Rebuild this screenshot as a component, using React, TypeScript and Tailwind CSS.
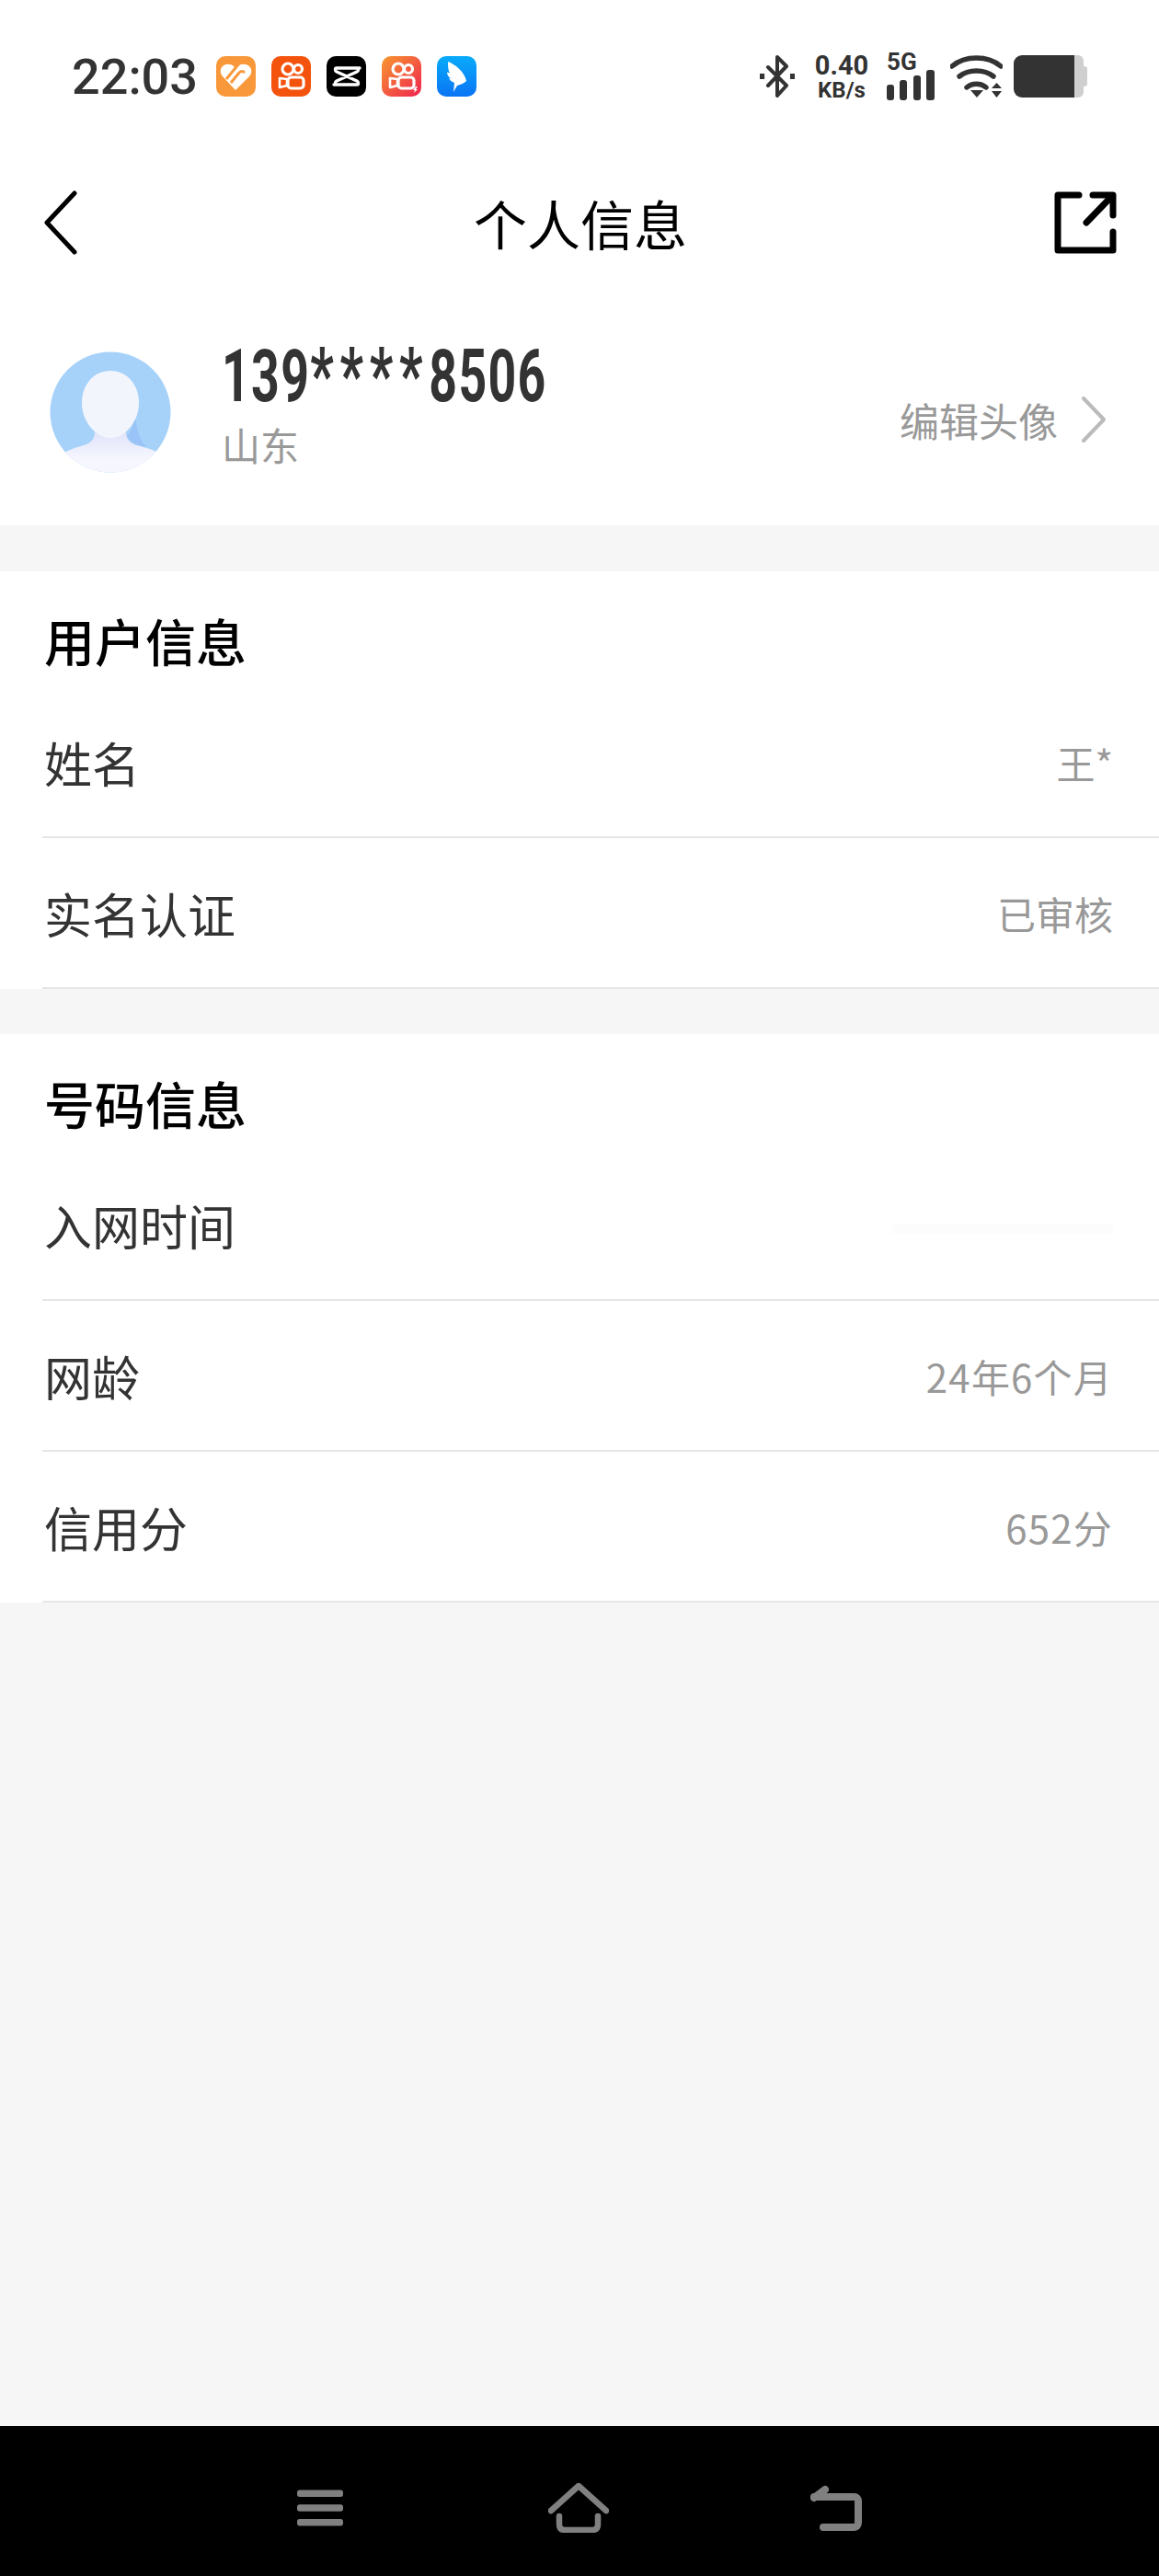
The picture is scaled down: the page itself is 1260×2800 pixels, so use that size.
const cjk = "font-['Noto_Sans_CJK_SC','Noto_Sans',sans-serif]"

const BackIcon = () => (
    <svg width="36" height="70" viewBox="0 0 36 70" fill="none" stroke="#000" strokeWidth="5" strokeLinecap="round" strokeLinejoin="round">
        <path d="M33 3 3 35l30 32" />
    </svg>
)

const ShareIcon = () => (
    <svg width="68" height="68" viewBox="0 0 68 68" fill="none" stroke="#000" strokeWidth="7" strokeLinecap="round" strokeLinejoin="round">
        <path d="M27 4H4v60h60V44" />
        <path d="M42 4h22v22" />
        <path d="M63 5 35 34" />
    </svg>
)

const HeartLogo = () => (
    <svg width="43" height="44" viewBox="0 0 43 44">
        <rect width="43" height="44" rx="10" fill="#f9983a" />
        <path d="M21 37 7 22c-3-4-3-8 0-11 3-3 9-3 12 0l2 2 2-2c3-3 10-3 13 0 3 3 3 8 0 11z" fill="#fff" />
        <path d="M25 8 11 25M31 18c-2-2-4-2-6 0L16 29" fill="none" stroke="#f9983a" strokeWidth="3" />
    </svg>
)

const CamLogo = ({ id, from, to, bolt }: { id: string; from: string; to: string; bolt?: boolean }) => (
    <svg width="43" height="44" viewBox="0 0 43 44">
        <defs>
            <linearGradient id={id} x1="0" y1="0" x2="1" y2="1">
                <stop offset="0" stopColor={from} />
                <stop offset="1" stopColor={to} />
            </linearGradient>
        </defs>
        <rect width="43" height="44" rx="10" fill={`url(#${id})`} />
        <g fill="none" stroke="#fff" strokeWidth="3.200">
            <circle cx="18" cy="14" r="6" />
            <circle cx="29" cy="14" r="4.500" />
            <rect x="18" y="23" width="17" height="12" rx="3.500" />
        </g>
        <path d="M17 25 9 24v10l8-2z" fill="none" stroke="#fff" strokeWidth="2.600" strokeLinejoin="round" />
        {bolt && <path d="M37 33l-3 4h2l-1 3 4-4h-2l2-3z" fill="#fff" />}
    </svg>
)

const CutLogo = () => (
    <svg width="43" height="44" viewBox="0 0 43 44">
        <rect width="43" height="44" rx="10" fill="#000" />
        <path d="M36 13H11c-2 0-2 3 0 4l22 10c2 1 2 4 0 4H8M33 13c2 0 2 3 0 4L11 27c-2 1-2 4 0 4" fill="none" stroke="#fff" strokeWidth="3.400" strokeLinecap="round" strokeLinejoin="round" />
    </svg>
)

const WingLogo = () => (
    <svg width="43" height="44" viewBox="0 0 43 44">
        <defs>
            <linearGradient id="wing" x1="0" y1="0" x2="0" y2="1">
                <stop offset="0" stopColor="#09abfb" />
                <stop offset="1" stopColor="#0a74f4" />
            </linearGradient>
        </defs>
        <rect width="43" height="44" rx="10" fill="url(#wing)" />
        <path d="M12 6c8 3 18 11 20 21-3 3-7 4-10 5l-4 7 1-10c-3-1-5-3-6-5l3 .5c-3-1-5-4-5-7l3 1c-2-3-2-8-2-12.500z" fill="#fff" />
    </svg>
)

const Bluetooth = () => (
    <svg width="38" height="46" viewBox="0 0 38 46" fill="none" stroke="#333" strokeWidth="4" strokeLinecap="round" strokeLinejoin="round">
        <path d="M9 13 29 33 19 44V2l10 10L9 33" />
        <path d="M2 23h.1M36 23h.1" strokeWidth="6" strokeLinecap="square" />
    </svg>
)

const Signal = () => (
    <svg width="52" height="33" viewBox="0 0 52 33" fill="#333">
        <rect x="0" y="16" width="8" height="17" rx="3" />
        <rect x="14" y="11" width="8" height="22" rx="3" />
        <rect x="29" y="6" width="8" height="27" rx="3" />
        <rect x="43" y="0" width="9" height="33" rx="3" />
    </svg>
)

const Wifi = () => (
    <svg width="57" height="48" viewBox="0 0 57 48" fill="none" stroke="#333" strokeWidth="5.500" strokeLinecap="round">
        <path d="M2 13C16 1 41 1 55 13" />
        <path d="M10 24c10-8 27-8 37 0" />
        <path d="M18 36c6-5 15-5 21 0" />
        <path d="M22 39h14l-7 8z" fill="#333" stroke="none" />
        <path d="M45 37h11l-5.500-6zM45 40h11l-5.500 7z" fill="#333" stroke="none" />
    </svg>
)

const Battery = () => (
    <div className="flex items-center">
        <div className="h-[46px] w-[66px] rounded-l-[9px] bg-[#333]" />
        <div className="h-[46px] w-[10px] rounded-r-[6px] bg-[#cfcfcf]" />
        <div className="h-[22px] w-[4px] rounded-r-[3px] bg-[#cfcfcf]" />
    </div>
)

const Avatar = () => (
    <svg width="132" height="132" viewBox="0 0 132 132">
        <defs>
            <clipPath id="disc">
                <circle cx="66" cy="66" r="65.500" />
            </clipPath>
            <linearGradient id="body" gradientUnits="userSpaceOnUse" x1="0" y1="90" x2="0" y2="118">
                <stop offset="0" stopColor="#e2e5fa" />
                <stop offset="1" stopColor="#f6f7fe" />
            </linearGradient>
        </defs>
        <g clipPath="url(#disc)">
            <rect width="132" height="132" fill="#a6d2fa" />
            <path d="M92 70c0 12-6 20-9 22l14 14 8-3C95 95 96 80 92 70z" fill="#9ac4f7" />
            <path d="M16 110c6-4 18-7 24-9 7-3 9-8 9-14h34c0 6 2 11 9 14 6 2 16 4 24 8v25H16z" fill="url(#body)" />
            <path d="M66 21c18 0 31 15 31 35 0 20-15 38-31 38S35 76 35 56c0-20 13-35 31-35z" fill="#f3f5fd" />
        </g>
    </svg>
)

const MenuIcon = () => (
    <svg width="54" height="42" viewBox="0 0 54 42" fill="#808080">
        <rect y="0" width="54" height="8" rx="3" />
        <rect y="17" width="54" height="8" rx="3" />
        <rect y="34" width="54" height="8" rx="3" />
    </svg>
)

const HomeIcon = () => (
    <svg width="66" height="54" viewBox="0 0 66 54" fill="none" stroke="#808080" strokeWidth="6.500" strokeLinecap="round" strokeLinejoin="round">
        <path d="M3 30 33 3l30 27" />
        <path d="M12 36v9c0 4 2 6 6 6h30c4 0 6-2 6-6v-9" />
    </svg>
)

const ReturnIcon = () => (
    <svg width="56" height="50" viewBox="0 0 56 50" fill="none" stroke="#808080" strokeWidth="8" strokeLinecap="round" strokeLinejoin="round">
        <path d="M4 13h44c2 0 4 2 4 4v24c0 3-2 5-4 5H14" />
        <path d="M4 14 16 5" />
    </svg>
)

const Row = ({ label, value, wide, faint }: { label: string; value?: string; wide?: boolean; faint?: boolean }) => (
    <div className="ml-[46px] flex h-[164px] items-center justify-between border-b-2 border-[#e6e6e6] pl-[2px] pr-[50px] pt-[1px]">
        <span className="text-[52px] text-[#333]">{label}</span>
        {value && <span className={`text-[42px] text-[#999] ${wide ? "tracking-[1.2px]" : ""}`}>{value}</span>}
        {faint && <div className="mt-[8px] h-[10px] w-[240px] bg-[#fcfcfc]" />}
    </div>
)

const Section = ({ title, children }: { title: string; children: React.ReactNode }) => (
    <section className="bg-white">
        <div className="h-[126px] pl-[48px] pt-[26px]">
            <h2 className="text-[55px] font-medium leading-[96px] text-black">{title}</h2>
        </div>
        {children}
    </section>
)

export default function App() {
    return (
        <div className={`flex h-[2800px] w-[1260px] flex-col bg-[#f6f6f6] ${cjk}`}>
            <div className="flex h-[166px] items-center bg-white pl-[78px]">
                <span className="w-[157px] font-['Roboto'] text-[54px] font-medium text-[#333]">22:03</span>
                <div className="flex gap-[17px]">
                    <HeartLogo />
                    <CamLogo id="cam-a" from="#f4530d" to="#f4530d" />
                    <CutLogo />
                    <CamLogo id="cam-b" from="#f8982f" to="#ee2350" bolt />
                    <WingLogo />
                </div>
                <div className="ml-auto flex items-center pr-[78px]">
                    <Bluetooth />
                    <div className="ml-[19px] flex w-[64px] flex-col items-center font-['Roboto'] font-bold leading-none text-[#333]">
                        <span className="text-[29px]">0.40</span>
                        <span className="text-[24px]">KB/s</span>
                    </div>
                    <div className="ml-[17px] flex w-[54px] flex-col">
                        <span className="font-['Roboto'] text-[26px] font-bold leading-[18px] text-[#333]">5G</span>
                        <Signal />
                    </div>
                    <div className="ml-[15px]">
                        <Wifi />
                    </div>
                    <div className="ml-[12px]">
                        <Battery />
                    </div>
                </div>
            </div>

            <header className="flex h-[152px] items-center justify-between bg-white pl-[48px] pr-[46px]">
                <div className="w-[68px]">
                    <BackIcon />
                </div>
                <h1 className="text-[58px] leading-none text-black">个人信息</h1>
                <ShareIcon />
            </header>

            <div className="flex h-[253px] items-start bg-white pl-[54px] pr-[57px] pt-[64px]">
                <Avatar />
                <div className="ml-[55px] flex flex-col">
                    <span className="block h-[72px] w-[352px] origin-left scale-x-[0.67] whitespace-nowrap font-['Roboto'] text-[80px] font-bold leading-[52px] tracking-[2px] text-[#333]">
                        139<span className="text-[84px] tracking-[10px]">****</span>8506
                    </span>
                    <span className="text-[42px] leading-[58px] text-[#999]">山东</span>
                </div>
                <div className="ml-auto mt-[48px] flex items-center">
                    <span className="text-[43px] leading-none text-[#999]">编辑头像</span>
                    <svg className="ml-[25px]" width="28" height="52" viewBox="0 0 28 52" fill="none" stroke="#bbb" strokeWidth="4" strokeLinecap="round" strokeLinejoin="round">
                        <path d="M3 3 25 26 3 49" />
                    </svg>
                </div>
            </div>

            <div className="mt-[50px]">
                <Section title="用户信息">
                    <Row label="姓名" value="王*" />
                    <Row label="实名认证" value="已审核" />
                </Section>
            </div>
            <div className="mt-[49px]">
                <Section title="号码信息">
                    <Row label="入网时间" faint />
                    <Row label="网龄" value="24年6个月" wide />
                    <Row label="信用分" value="652分" wide />
                </Section>
            </div>

            <div className="flex-1" />

            <nav className="flex h-[163px] items-center bg-black pl-[323px] pr-[323px] pt-[15px]">
                <MenuIcon />
                <div className="ml-[223px]">
                    <HomeIcon />
                </div>
                <div className="ml-[219px]">
                    <ReturnIcon />
                </div>
            </nav>
        </div>
    )
}
